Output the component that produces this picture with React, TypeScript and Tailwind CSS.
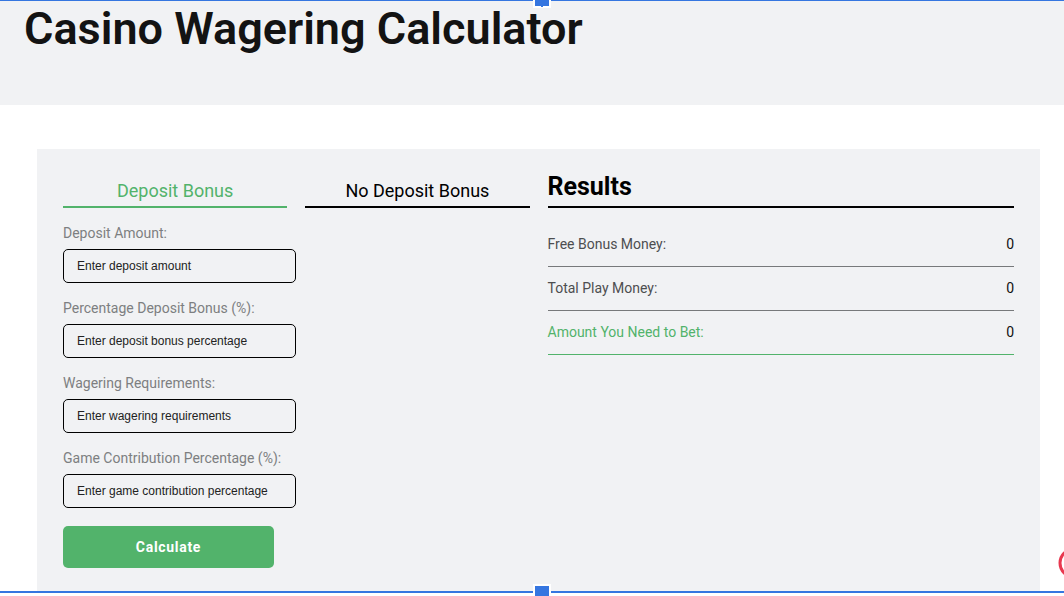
import { useState } from "react";
import clsx from "clsx";

type FieldProps = {
  id: string;
  label: string;
  placeholder: string;
};

const fields: FieldProps[] = [
  {
    id: "deposit",
    label: "Deposit Amount:",
    placeholder: "Enter deposit amount",
  },
  {
    id: "percentage",
    label: "Percentage Deposit Bonus (%):",
    placeholder: "Enter deposit bonus percentage",
  },
  {
    id: "wagering",
    label: "Wagering Requirements:",
    placeholder: "Enter wagering requirements",
  },
  {
    id: "contribution",
    label: "Game Contribution Percentage (%):",
    placeholder: "Enter game contribution percentage",
  },
];

const tabs = ["Deposit Bonus", "No Deposit Bonus"];

const results = [
  { label: "Free Bonus Money:", value: 0 },
  { label: "Total Play Money:", value: 0 },
  { label: "Amount You Need to Bet:", value: 0, highlight: true },
];

function Field({ id, label, placeholder }: FieldProps) {
  return (
    <div className="flex flex-col">
      <label htmlFor={id} className="text-sm leading-5 text-[#7d7f81]">
        {label}
      </label>
      <input
        id={id}
        type="text"
        placeholder={placeholder}
        className="mt-1.5 h-[34px] w-1/2 rounded-[5px] border border-black bg-transparent px-[13px] font-['Liberation_Sans',Arial,sans-serif] text-xs text-[#222] placeholder:text-[#222]"
      />
    </div>
  );
}

function Results() {
  return (
    <section>
      <h2 className="border-b-2 border-black pt-[3px] pb-px text-[25px] leading-9 font-bold text-black">
        Results
      </h2>
      <table className="mt-3.5 w-full border-collapse text-sm">
        <tbody>
          {results.map(({ label, value, highlight }) => (
            <tr
              key={label}
              className={clsx(
                "h-11 border-b",
                highlight ? "border-[#52b36b]" : "border-[#77797b]"
              )}
            >
              <th
                scope="row"
                className={clsx(
                  "p-0 text-left font-normal",
                  highlight ? "text-[#52b36b]" : "text-[#4d4e50]"
                )}
              >
                {label}
              </th>
              <td className="p-0 text-right text-[#111]">{value}</td>
            </tr>
          ))}
        </tbody>
      </table>
    </section>
  );
}

// blue outline with a drag handle on the top and bottom edge
function SelectionFrame() {
  return (
    <div className="pointer-events-none absolute inset-x-0 top-0 bottom-[3px] border-t border-b-2 border-[#3576e0]">
      <div className="absolute -top-[5px] left-[533px] h-3 w-[18px] border-2 border-white bg-[#3576e0]">
        <div className="mx-auto mt-2 h-px w-0.5 bg-[#3576e0]" />
      </div>
      <div className="absolute -bottom-[11px] left-[533px] h-[18px] w-[18px] border-2 border-white bg-[#3576e0]" />
    </div>
  );
}

export default function App() {
  const [active, setActive] = useState(tabs[0]);
  return (
    <div className="relative flex min-h-screen flex-col overflow-hidden bg-white pb-1 font-[Roboto,sans-serif]">
      <header className="bg-[#f1f2f4] px-6 pt-[5px] pb-[52px]">
        <h1 className="text-[45px] leading-[48px] font-semibold text-[#131313]">
          Casino Wagering Calculator
        </h1>
      </header>

      <main className="mt-11 mr-6 ml-[37px] grid flex-1 grid-cols-2 gap-[18px] bg-[#f1f2f4] px-[26px] pt-[17px] pb-[23px]">
        <section>
          <div className="grid grid-cols-2 gap-[18px]">
            {tabs.map((tab) => (
              <button
                key={tab}
                type="button"
                onClick={() => setActive(tab)}
                className={clsx(
                  "border-b-2 pt-3 pb-0.5 text-lg leading-[26px]",
                  tab === active
                    ? "border-[#52b36b] text-[#52b36b]"
                    : "border-black text-black"
                )}
              >
                {tab}
              </button>
            ))}
          </div>
          <form
            className="mt-[15px] flex flex-col gap-[15px]"
            onSubmit={(e) => e.preventDefault()}
          >
            {fields.map((field) => (
              <Field key={field.id} {...field} />
            ))}
            <button
              type="submit"
              className="mt-[3px] h-[42px] w-[211px] rounded-[5px] bg-[#52b36b] text-sm font-bold tracking-wider text-white"
            >
              Calculate
            </button>
          </form>
        </section>
        <Results />
      </main>

      <svg
        className="absolute right-0 bottom-[17px] h-8 w-1.5"
        viewBox="0 0 6 32"
        fill="none"
        aria-hidden="true"
      >
        <circle cx="16" cy="16" r="14" stroke="#e8384f" strokeWidth="3" />
      </svg>
      <SelectionFrame />
    </div>
  );
}
